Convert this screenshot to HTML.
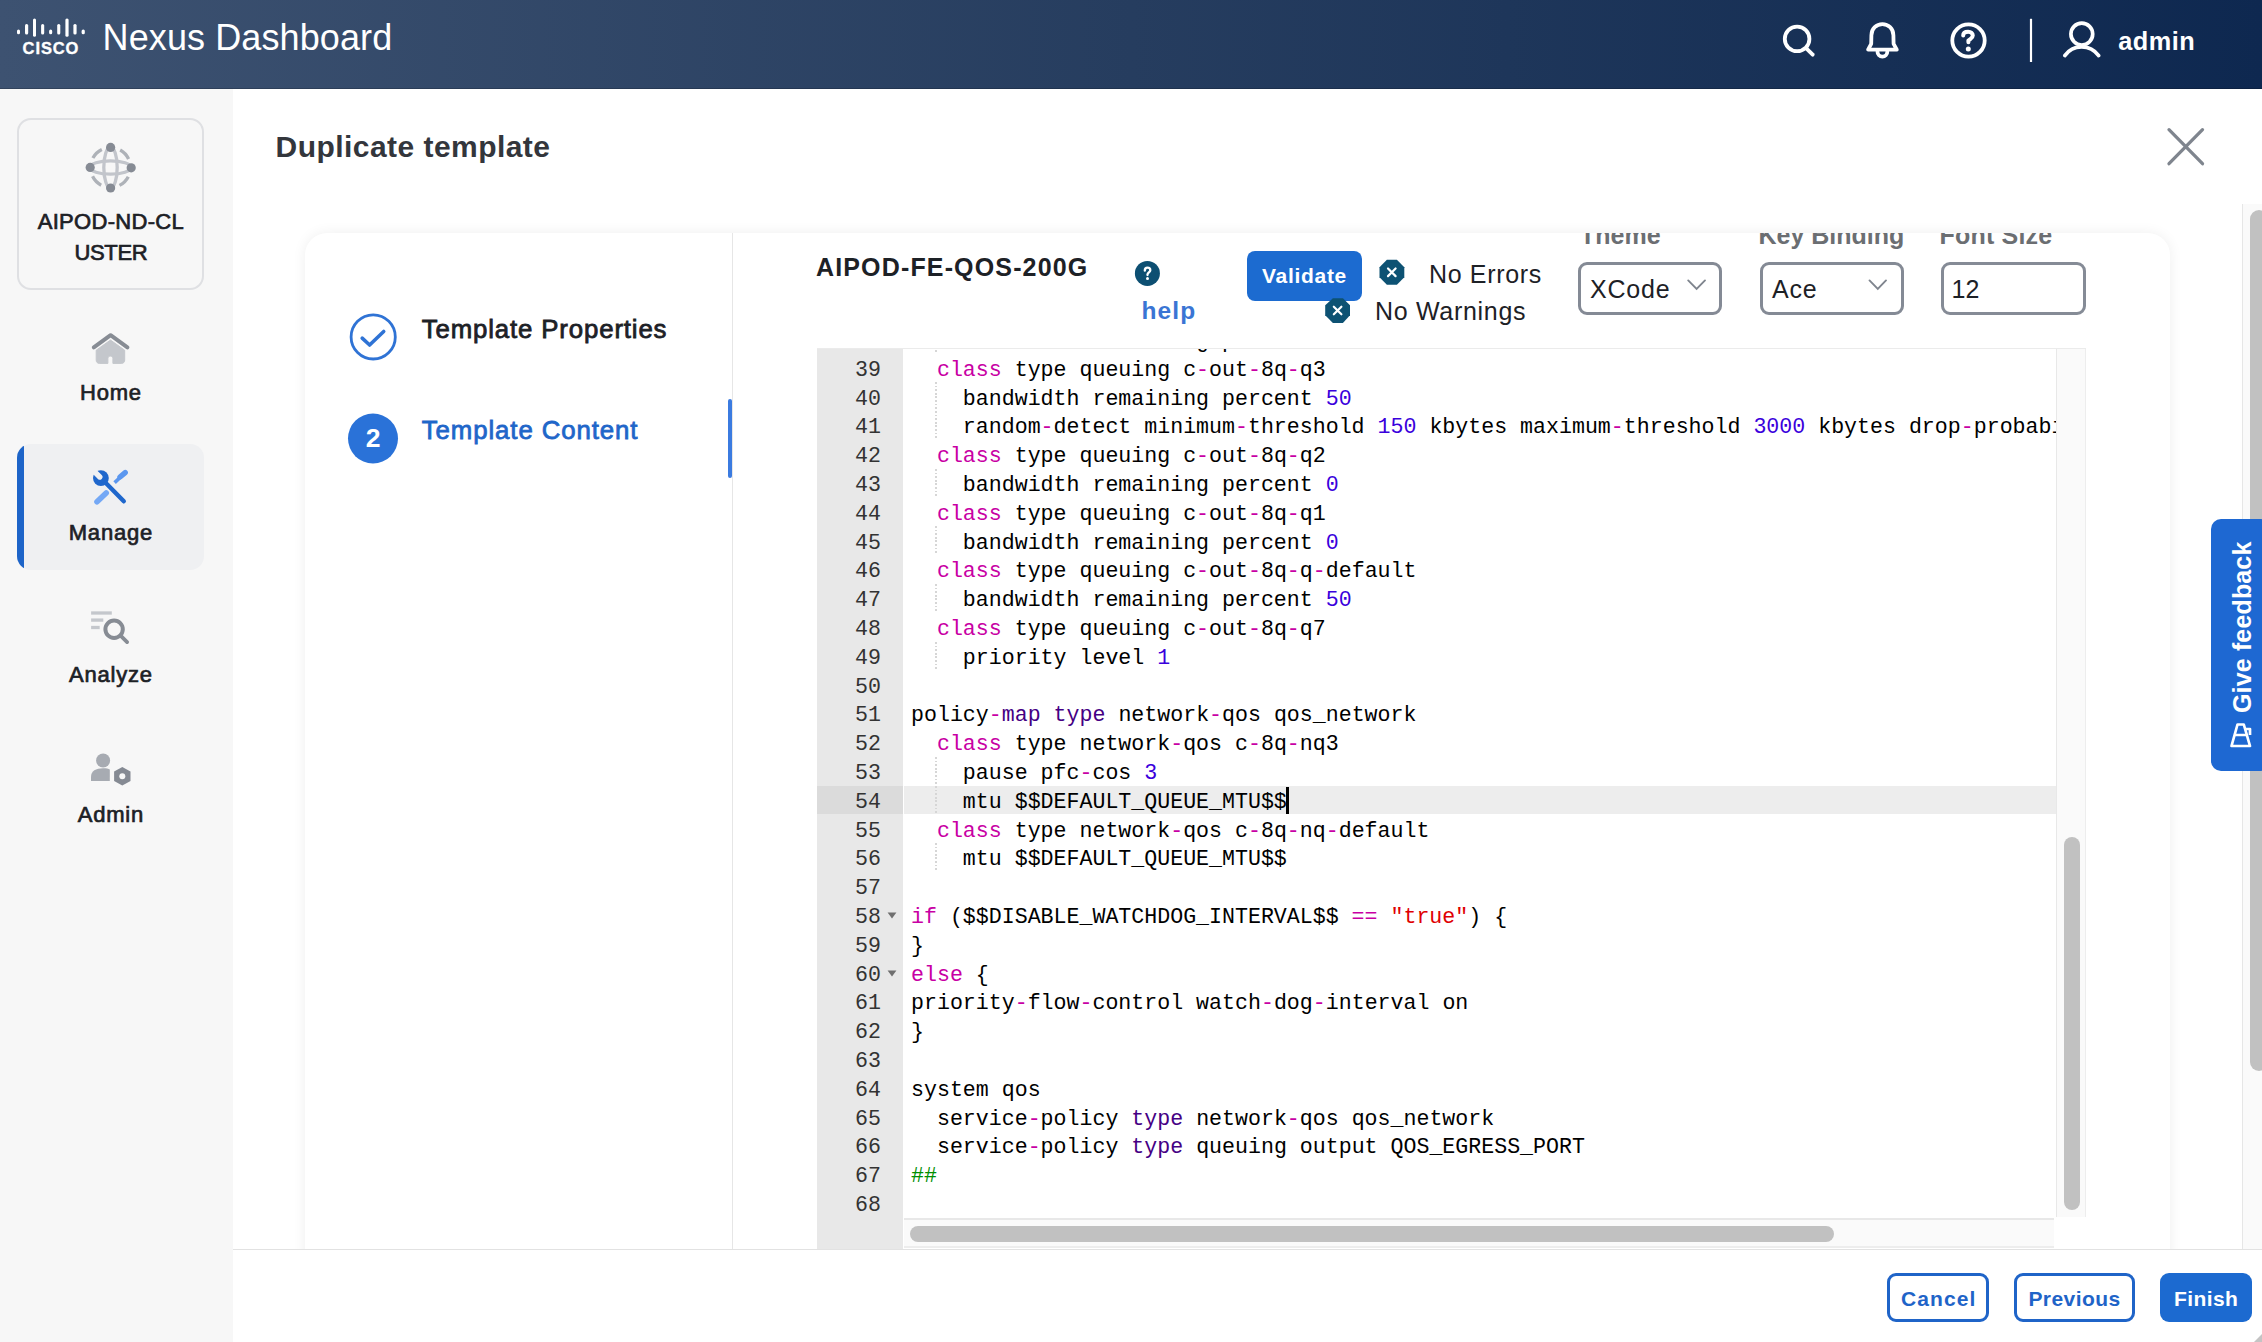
<!DOCTYPE html>
<html><head><meta charset="utf-8">
<style>
html,body{margin:0;padding:0;width:2262px;height:1342px;overflow:hidden;background:#fff;font-family:"Liberation Sans",sans-serif;}
.a{position:absolute;}
.t{position:absolute;white-space:pre;line-height:1;}
#hdr{left:0;top:0;width:2262px;height:89px;background:linear-gradient(90deg,#3d5271 0%,#263d5f 50%,#0e2850 100%);box-shadow:inset 0 -1px 0 rgba(0,0,0,0.18);}
#side{left:0;top:89px;width:233px;height:1253px;background:#f7f7f7;}
.nav{color:#1d2126;font-size:22px;text-align:center;width:221px;left:0.4px;-webkit-text-stroke:0.7px #1d2126;letter-spacing:0.8px}
.ig{width:1.8px;background:repeating-linear-gradient(180deg,#d6d6d6 0 1.8px,transparent 1.8px 3.6px);}
.code{position:absolute;left:0;top:0;font-family:"Liberation Mono",monospace;font-size:21.6px;line-height:28.8px;white-space:pre;color:#000;}
.k{color:#C800A4}.n{color:#3A00DC}.f{color:#450084}.s{color:#DF0002}.c{color:#008E00}
</style></head><body>
<!-- HEADER -->
<div id="hdr" class="a">
  <svg class="a" style="left:0;top:0" width="100" height="88">
    <g fill="#fff">
      <rect x="17" y="29.4" width="3" height="4.8" rx="1.5"/>
      <rect x="25" y="23.9" width="3.2" height="10.5" rx="1.5"/>
      <rect x="33" y="18.5" width="3" height="18.3" rx="1.5"/>
      <rect x="41.1" y="23.9" width="3.1" height="10.5" rx="1.5"/>
      <rect x="49.1" y="29.4" width="3.1" height="4.8" rx="1.5"/>
      <rect x="57.2" y="23.9" width="3.1" height="10.5" rx="1.5"/>
      <rect x="65.4" y="18.5" width="3.2" height="18.3" rx="1.5"/>
      <rect x="73.4" y="23.9" width="3.2" height="10.5" rx="1.5"/>
      <rect x="81.6" y="29.4" width="3.2" height="4.8" rx="1.5"/>
    </g>
  </svg>
  <div class="t" style="left:22.6px;top:39.8px;font-size:16.5px;font-weight:bold;color:#fff;letter-spacing:0.9px;-webkit-text-stroke:0.35px #fff">CISCO</div>
  <div class="t" style="left:102.6px;top:20.3px;font-size:36px;color:#fff;letter-spacing:0.1px">Nexus Dashboard</div>
  <svg class="a" style="left:1760px;top:0" width="502" height="88" fill="none" stroke="#fff" stroke-width="3.8" stroke-linecap="round" stroke-linejoin="round">
    <!-- search -->
    <circle cx="37.1" cy="38.9" r="12.3"/>
    <line x1="46.3" y1="48.3" x2="52.7" y2="54.7"/>
    <!-- bell -->
    <path d="M108.1 49.6 L111.2 43.8 L111.4 35.2 C111.4 28.5 116.5 24.1 122.4 24.1 C128.3 24.1 133.4 28.5 133.4 35.2 L133.6 43.8 L136.8 49.6 Z"/>
    <path d="M117.5 51.8 A4.9 4.9 0 0 0 127.3 51.8"/>
    <!-- help -->
    <circle cx="208.5" cy="40.5" r="16.2"/>
    <path d="M203.2 35.6 C203.2 32.6 205.4 31.7 208.1 31.7 C210.9 31.7 212.8 33.4 212.8 35.6 C212.8 38.3 209.9 38.8 208.4 40.6 L208.4 42.2" stroke-width="4"/>
    <circle cx="208.3" cy="49" r="2.5" fill="#fff" stroke="none"/>
    <!-- divider -->
    <line x1="271" y1="18.8" x2="271" y2="62" stroke-width="2.2" stroke-linecap="butt"/>
    <!-- user -->
    <circle cx="321.8" cy="34.1" r="10.9" stroke-width="3.7"/>
    <path d="M304.8 55.6 C309 49.5 315 46.8 321.6 46.8 C328.2 46.8 334.3 49.5 338.7 55.6" stroke-width="3.7"/>
  </svg>
  <div class="t" style="left:2118.3px;top:29.3px;font-size:25.3px;font-weight:bold;color:#fff;letter-spacing:0.5px">admin</div>
</div>
<!-- SIDEBAR -->
<div id="side" class="a"></div>
<div class="a" style="left:17px;top:118px;width:183px;height:168px;border:2px solid #dfe0e3;border-radius:14px;background:#f7f7f7"></div>
<svg class="a" style="left:80px;top:137px" width="62" height="62">
  <g fill="none" stroke="#c2c5cb" stroke-width="3.3">
    <ellipse cx="30.5" cy="30.5" rx="20.5" ry="6.7"/>
    <ellipse cx="30.5" cy="30.5" rx="6.7" ry="20.5"/>
  </g>
  <circle cx="30.5" cy="30.5" r="20" fill="none" stroke="#aeb2b8" stroke-width="3.3" stroke-dasharray="12.4 19" stroke-dashoffset="-9.5"/>
  <g fill="#868b94">
    <circle cx="30.6" cy="10.4" r="4.6"/><circle cx="10.2" cy="30.4" r="4.6"/><circle cx="51.2" cy="30.8" r="4.6"/><circle cx="30.6" cy="51" r="4.6"/>
  </g>
</svg>
<div class="t nav" style="top:210.5px;letter-spacing:0.3px">AIPOD-ND-CL</div>
<div class="t nav" style="top:242.4px;letter-spacing:-0.4px">USTER</div>
<!-- home -->
<svg class="a" style="left:88px;top:326px" width="46" height="42">
  <path d="M8.2 24.2 L22.5 14.1 L36.7 24.2 L36.7 34 C36.7 36.2 35.5 37.4 33.3 37.4 L24.9 37.4 L24.9 32.6 C24.9 31.2 23.8 30.1 22.4 30.1 C21 30.1 19.9 31.2 19.9 32.6 L19.9 37.4 L11.6 37.4 C9.4 37.4 8.2 36.2 8.2 34 Z" fill="#c4c7cc" stroke="#c4c7cc" stroke-width="1" stroke-linejoin="round"/>
  <path d="M5.8 21.3 L22.6 9.2 L39.4 21.3" fill="none" stroke="#878c94" stroke-width="4" stroke-linecap="round" stroke-linejoin="round"/>
</svg>
<div class="t nav" style="top:382.4px;">Home</div>
<!-- manage -->
<div class="a" style="left:17px;top:444px;width:187px;height:126px;background:#eff0f2;border-radius:14px;overflow:hidden">
  <div class="a" style="left:0;top:0;width:7px;height:126px;background:#1d64c8"></div>
</div>
<svg class="a" style="left:85px;top:460px" width="50" height="50">
  <path d="M12 41.8 L21.2 32.9" stroke="#74a8f5" stroke-width="5.6" stroke-linecap="round"/>
  <path d="M29.6 22.6 L36.5 16.2" stroke="#5b97ef" stroke-width="3.6" stroke-linecap="butt"/>
  <path d="M35 17 L40.2 12.6" stroke="#5b97ef" stroke-width="5.4" stroke-linecap="round"/>
  <path d="M19.6 21.8 L38.8 41.3" stroke="#1f67cc" stroke-width="4.4" stroke-linecap="round"/>
  <circle cx="15.9" cy="18.1" r="7.9" fill="#1f67cc"/>
  <path d="M14.8 17 L6.5 8.7" stroke="#eff0f2" stroke-width="5.4" stroke-linecap="round"/>
</svg>
<div class="t nav" style="top:522.2px;">Manage</div>
<!-- analyze -->
<svg class="a" style="left:88px;top:605px" width="46" height="44">
  <g stroke="#c4c7cc" stroke-width="3.3">
    <line x1="3.1" y1="8" x2="23.8" y2="8"/><line x1="3.1" y1="15.1" x2="15.3" y2="15.1"/><line x1="3.1" y1="22.5" x2="11.7" y2="22.5"/>
  </g>
  <circle cx="26.1" cy="24.2" r="8.7" fill="none" stroke="#878c94" stroke-width="4"/>
  <line x1="32.6" y1="30.7" x2="39.1" y2="37.1" stroke="#878c94" stroke-width="3.8" stroke-linecap="round"/>
</svg>
<div class="t nav" style="top:663.8px;">Analyze</div>
<!-- admin -->
<svg class="a" style="left:88px;top:748px" width="46" height="44">
  <circle cx="15.1" cy="12.5" r="7" fill="#a7abb2"/>
  <path d="M3 33 L3 29 C3 23 8 20.3 15 20.3 C18.5 20.3 20.5 20.8 21.8 21.6 L21.8 33 Z" fill="#a7abb2"/>
  <path d="M34.3 19 L42.5 23.6 L42.5 33 L34.3 37.6 L26.1 33 L26.1 23.6 Z" fill="#858a93"/>
  <circle cx="34.3" cy="28.3" r="3" fill="#f7f7f7"/>
</svg>
<div class="t nav" style="top:803.5px;">Admin</div>

<!-- MAIN TITLE -->
<div class="t" style="left:275.6px;top:132.3px;font-size:30px;font-weight:bold;color:#33363c;letter-spacing:0.45px">Duplicate template</div>
<svg class="a" style="left:2160px;top:120px" width="52" height="52">
  <path d="M9 9.7 L42.5 43.7 M42.5 9.7 L9 43.7" stroke="#7f858e" stroke-width="3.3" stroke-linecap="round"/>
</svg>

<!-- CARD -->
<div class="a" style="left:305px;top:232.5px;width:1865px;height:1200px;background:#fff;border-radius:22px;box-shadow:0 0 14px rgba(0,0,0,0.065)"></div>
<div class="a" style="left:732px;top:232.5px;width:1px;height:1020px;background:#e6e6e6"></div>
<!-- stepper -->
<svg class="a" style="left:340px;top:300px" width="70" height="180">
  <circle cx="33.2" cy="36.9" r="22.1" fill="none" stroke="#2f73d5" stroke-width="2.8"/>
  <path d="M22.2 38.2 L29.6 45 L43.7 31.5" fill="none" stroke="#2f73d5" stroke-width="3.6" stroke-linecap="round" stroke-linejoin="round"/>
  <circle cx="33" cy="138.5" r="25" fill="#2a72d8"/>
</svg>
<div class="t" style="left:362px;top:425px;width:22px;text-align:center;font-size:26.5px;font-weight:bold;color:#fff">2</div>
<div class="t" style="left:421.8px;top:317.4px;font-size:25.8px;color:#1d2126;-webkit-text-stroke:0.8px #1d2126;letter-spacing:0.85px">Template Properties</div>
<div class="t" style="left:421.8px;top:417.8px;font-size:25.8px;color:#1f66c9;-webkit-text-stroke:0.8px #1f66c9;letter-spacing:0.9px">Template Content</div>
<div class="a" style="left:728px;top:399px;width:4px;height:78.5px;background:#3b7be0;border-radius:2px"></div>

<!-- EDITOR HEADER -->
<div id="ehdr" class="a" style="left:733px;top:232.5px;width:1437px;height:120px;overflow:hidden">
  <div class="t" style="left:847px;top:-9.3px;font-size:25px;font-weight:bold;color:#6b6e72">Theme</div>
  <div class="t" style="left:1025.5px;top:-9.3px;font-size:25px;font-weight:bold;color:#6b6e72">Key Binding</div>
  <div class="t" style="left:1206.5px;top:-9.3px;font-size:25px;font-weight:bold;color:#6b6e72;letter-spacing:0.2px">Font Size</div>
</div>
<div class="t" style="left:816px;top:254.6px;font-size:25px;font-weight:bold;color:#1d2126;letter-spacing:1.15px">AIPOD-FE-QOS-200G</div>
<svg class="a" style="left:1130px;top:256px" width="36" height="36">
  <circle cx="17.4" cy="17.4" r="12.5" fill="#0d4f72"/>
  <path d="M14.8 14.7 C14.8 12.8 16 11.7 17.5 11.7 C19.1 11.7 20.3 12.8 20.3 14.2 C20.3 16.2 17.9 16.5 17.5 18.4 L17.5 19" fill="none" stroke="#fff" stroke-width="2.3" stroke-linecap="round"/>
  <circle cx="17.5" cy="22.6" r="1.5" fill="#fff"/>
</svg>
<div class="t" style="left:1141.5px;top:298.5px;font-size:24.5px;font-weight:bold;color:#3a75d4;letter-spacing:1.1px">help</div>
<div class="a" style="left:1247px;top:251px;width:115px;height:49.5px;background:#1c6bd0;border-radius:8px"></div>
<div class="t" style="left:1262px;top:265.3px;font-size:21px;font-weight:bold;color:#fff;letter-spacing:0.7px">Validate</div>
<svg class="a" style="left:1370px;top:250px" width="40" height="80">
  <path d="M16.9 9.8 L26.9 9.8 L34.3 17.2 L34.3 27.3 L26.9 34.8 L16.9 34.8 L9.5 27.3 L9.5 17.2 Z" fill="#0d5273" transform="translate(0,0)"/>
  <path d="M18 18.5 L25.6 26.1 M25.6 18.5 L18 26.1" stroke="#fff" stroke-width="2.2" stroke-linecap="round"/>
</svg>
<svg class="a" style="left:1316px;top:288px" width="40" height="40">
  <path d="M16.9 10.2 L26.9 10.2 L34 17.3 L34 27.3 L26.9 34.9 L16.9 34.9 L9.2 27.3 L9.2 17.3 Z" fill="#0d5273"/>
  <path d="M17.8 18.7 L25.4 26.3 M25.4 18.7 L17.8 26.3" stroke="#fff" stroke-width="2.2" stroke-linecap="round"/>
</svg>
<div class="t" style="left:1429px;top:261.6px;font-size:25px;color:#1d2126;letter-spacing:0.65px">No Errors</div>
<div class="t" style="left:1375px;top:299.3px;font-size:25px;color:#1d2126;letter-spacing:0.7px">No Warnings</div>
<!-- selects -->
<div class="a" style="left:1578.3px;top:262.4px;width:144.1px;height:53px;border:3px solid #848a95;border-radius:9px;box-sizing:border-box"></div>
<div class="t" style="left:1590px;top:276.5px;font-size:25px;color:#1d2126;letter-spacing:0.8px">XCode</div>
<svg class="a" style="left:1685px;top:276px" width="24" height="18"><path d="M3.2 4.4 L11.6 12.8 L20 4.4" fill="none" stroke="#7f858e" stroke-width="1.9" stroke-linecap="round"/></svg>
<div class="a" style="left:1759.6px;top:262.4px;width:144.7px;height:53px;border:3px solid #848a95;border-radius:9px;box-sizing:border-box"></div>
<div class="t" style="left:1772px;top:276.5px;font-size:25px;color:#1d2126;letter-spacing:0.8px">Ace</div>
<svg class="a" style="left:1866px;top:276px" width="24" height="18"><path d="M3.5 4.4 L11.8 12.8 L20 4.4" fill="none" stroke="#7f858e" stroke-width="1.9" stroke-linecap="round"/></svg>
<div class="a" style="left:1941.4px;top:262.3px;width:144.3px;height:53.2px;border:3px solid #858b96;border-radius:9px;box-sizing:border-box"></div>
<div class="t" style="left:1951.5px;top:276.5px;font-size:25px;color:#1d2126">12</div>

<!--EDITOR-->
<div class="a" style="left:816.5px;top:347.5px;width:1269.5px;height:901px;overflow:hidden;background:#fff">
<div class="a" style="left:0;top:0;width:86.5px;height:901px;background:#e8e8e8"></div>
<div class="a" style="left:0;top:438.00px;width:86.5px;height:28.7px;background:#dbdbdb"></div>
<div class="a" style="left:87.5px;top:438.00px;width:1152px;height:28.7px;background:#ededed"></div>
<div class="a ig" style="left:118.7px;top:-22.80px;height:28.8px"></div>
<div class="a ig" style="left:118.7px;top:34.80px;height:28.8px"></div>
<div class="a ig" style="left:118.7px;top:63.60px;height:28.8px"></div>
<div class="a ig" style="left:118.7px;top:121.20px;height:28.8px"></div>
<div class="a ig" style="left:118.7px;top:178.80px;height:28.8px"></div>
<div class="a ig" style="left:118.7px;top:236.40px;height:28.8px"></div>
<div class="a ig" style="left:118.7px;top:294.00px;height:28.8px"></div>
<div class="a ig" style="left:118.7px;top:409.20px;height:28.8px"></div>
<div class="a ig" style="left:118.7px;top:438.00px;height:28.8px"></div>
<div class="a ig" style="left:118.7px;top:495.60px;height:28.8px"></div>
<div class="code gut" style="left:0;top:-20.45px;width:64.5px;text-align:right;color:#333">38
39
40
41
42
43
44
45
46
47
48
49
50
51
52
53
54
55
56
57
58
59
60
61
62
63
64
65
66
67
68</div>
<svg class="a" style="left:70px;top:564.60px" width="10" height="7"><path d="M0.6 0.5 L9.4 0.5 L5 6.4 Z" fill="#6f6f6f"/></svg>
<svg class="a" style="left:70px;top:622.20px" width="10" height="7"><path d="M0.6 0.5 L9.4 0.5 L5 6.4 Z" fill="#6f6f6f"/></svg>
<div class="code" style="left:94.5px;top:-20.45px">    bandwidth remaining percent <span class="n">0</span>
  <span class="k">class</span> type queuing c<span class="k">-</span>out<span class="k">-</span>8q<span class="k">-</span>q3
    bandwidth remaining percent <span class="n">50</span>
    random<span class="k">-</span>detect minimum<span class="k">-</span>threshold <span class="n">150</span> kbytes maximum<span class="k">-</span>threshold <span class="n">3000</span> kbytes drop<span class="k">-</span>probability <span class="n">7</span> weight <span class="n">0</span> ecn
  <span class="k">class</span> type queuing c<span class="k">-</span>out<span class="k">-</span>8q<span class="k">-</span>q2
    bandwidth remaining percent <span class="n">0</span>
  <span class="k">class</span> type queuing c<span class="k">-</span>out<span class="k">-</span>8q<span class="k">-</span>q1
    bandwidth remaining percent <span class="n">0</span>
  <span class="k">class</span> type queuing c<span class="k">-</span>out<span class="k">-</span>8q<span class="k">-</span>q<span class="k">-</span>default
    bandwidth remaining percent <span class="n">50</span>
  <span class="k">class</span> type queuing c<span class="k">-</span>out<span class="k">-</span>8q<span class="k">-</span>q7
    priority level <span class="n">1</span>

policy<span class="k">-</span><span class="f">map</span> <span class="f">type</span> network<span class="k">-</span>qos qos_network
  <span class="k">class</span> type network<span class="k">-</span>qos c<span class="k">-</span>8q<span class="k">-</span>nq3
    pause pfc<span class="k">-</span>cos <span class="n">3</span>
    mtu $$DEFAULT_QUEUE_MTU$$
  <span class="k">class</span> type network<span class="k">-</span>qos c<span class="k">-</span>8q<span class="k">-</span>nq<span class="k">-</span>default
    mtu $$DEFAULT_QUEUE_MTU$$

<span class="k">if</span> ($$DISABLE_WATCHDOG_INTERVAL$$ <span class="k">==</span> <span class="s">&quot;true&quot;</span>) {
}
<span class="k">else</span> {
priority<span class="k">-</span>flow<span class="k">-</span>control watch<span class="k">-</span>dog<span class="k">-</span>interval on
}

system qos
  service<span class="k">-</span>policy <span class="f">type</span> network<span class="k">-</span>qos qos_network
  service<span class="k">-</span>policy <span class="f">type</span> queuing output QOS_EGRESS_PORT
<span class="c">##</span>
</div>
<div class="a" style="left:469.84px;top:439.00px;width:2.2px;height:27px;background:#000"></div>
<div class="a" style="left:1239.7px;top:0;width:29.5px;height:869.5px;background:#fafafa;border-left:1px solid #e8e8e8;border-right:1px solid #ededed;box-sizing:border-box"></div>
<div class="a" style="left:1247.5px;top:489.2px;width:15.8px;height:373.8px;background:#c1c1c1;border-radius:8px"></div>
<div class="a" style="left:87.5px;top:870.3px;width:1149.5px;height:30.7px;background:#fafafa;border-top:2px solid #e8e8e8;border-bottom:2px solid #ededed;box-sizing:border-box"></div>
<div class="a" style="left:93.5px;top:878.5px;width:923.6px;height:16px;background:#c1c1c1;border-radius:8px"></div>
<div class="a" style="left:0;top:0;width:1269.5px;height:1px;background:#ebebeb"></div>
</div>
<!--FOOTER-->
<div class="a" style="left:2242px;top:204px;width:20px;height:1045px;background:#fafafa;border-left:1.5px solid #e6e6e6;box-sizing:border-box"></div>
<div class="a" style="left:2250px;top:210px;width:18px;height:861px;background:#c1c1c1;border-radius:9px"></div>
<div class="a" style="left:233px;top:1249px;width:2029px;height:93px;background:#fff;border-top:1.3px solid #e2e2e2;box-sizing:border-box"></div>
<div class="a" style="left:1886.5px;top:1273.3px;width:102.2px;height:49px;border:3px solid #1f64c8;border-radius:9px;box-sizing:border-box"></div>
<div class="t" style="left:1901px;top:1288.1px;font-size:21px;font-weight:bold;color:#1f64c8;letter-spacing:1.1px">Cancel</div>
<div class="a" style="left:2014.4px;top:1273.3px;width:120.2px;height:49px;border:3px solid #1f64c8;border-radius:9px;box-sizing:border-box"></div>
<div class="t" style="left:2028.4px;top:1288.1px;font-size:21px;font-weight:bold;color:#1f64c8;letter-spacing:0.45px">Previous</div>
<div class="a" style="left:2160.3px;top:1273.3px;width:91.5px;height:49px;background:#1c6ad0;border-radius:9px"></div>
<div class="t" style="left:2174px;top:1288.1px;font-size:21px;font-weight:bold;color:#fff;letter-spacing:0.4px">Finish</div>
<svg class="a" style="left:2250px;top:1330px" width="12" height="12"><path d="M12 4 L12 12 L4 12 Z" fill="#c4c4c4"/></svg>
<!-- feedback tab -->
<div class="a" style="left:2211px;top:519px;width:60px;height:251.6px;background:#1e68d2;border-radius:10px"></div>
<div class="t" style="left:2229.8px;top:712.7px;transform-origin:0 0;transform:rotate(-90deg);font-size:25px;font-weight:bold;color:#fff;letter-spacing:0.15px">Give feedback</div>
<svg class="a" style="left:2226px;top:718px" width="30" height="34">
  <path d="M11.5 6.5 L17.8 6.5 L24 28 L5.5 28 Z" fill="none" stroke="#fff" stroke-width="2.7" stroke-linejoin="round"/>
  <path d="M8.2 17 L21.5 17 M19.2 11 L24 11 L24 17" fill="none" stroke="#fff" stroke-width="2.7" stroke-linejoin="round"/>
</svg>

</body></html>
